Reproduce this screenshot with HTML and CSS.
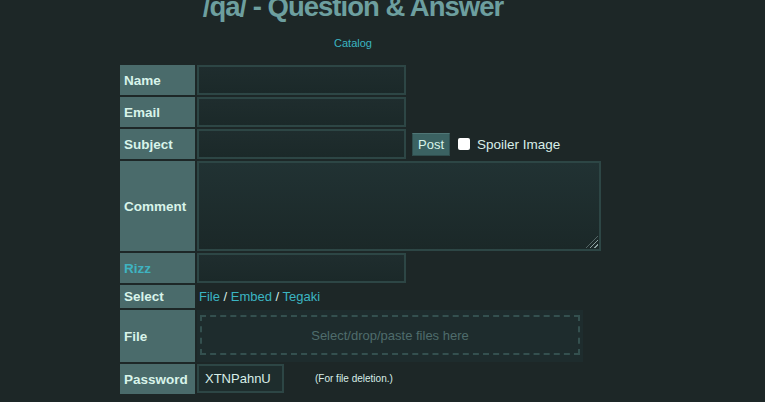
FILE: index.html
```html
<!DOCTYPE html>
<html lang="en">
<head>
    <meta charset="UTF-8">
    <meta name="viewport" content="width=device-width, initial-scale=1.0">
    <title>/qa/ - Question &amp; Answer</title>
    <link rel="stylesheet" href="styles.css">
</head>
<body>
    <header class="board-header">
        <h1 class="board-title">/qa/ - Question &amp; Answer</h1>
        <a class="catalog-link" href="#">Catalog</a>
    </header>

    <form class="post-form">
        <table class="post-table">
            <tr>
                <th>Name</th>
                <td><input class="field" type="text"></td>
            </tr>
            <tr>
                <th>Email</th>
                <td><input class="field" type="text"></td>
            </tr>
            <tr>
                <th>Subject</th>
                <td class="subject-cell">
                    <input class="field" type="text">
                    <button class="post-btn" type="button">Post</button>
                    <label class="spoiler"><span class="checkbox"></span>Spoiler Image</label>
                </td>
            </tr>
            <tr>
                <th>Comment</th>
                <td><div class="comment-box"><span class="grip"></span></div></td>
            </tr>
            <tr>
                <th class="required">Rizz</th>
                <td><input class="field" type="text"></td>
            </tr>
            <tr class="select-row">
                <th>Select</th>
                <td class="select-links">
                    <a href="#">File</a> / <a href="#">Embed</a> / <a href="#">Tegaki</a>
                </td>
            </tr>
            <tr>
                <th>File</th>
                <td>
                    <div class="dropzone">
                        <div class="dropzone-inner">Select/drop/paste files here</div>
                    </div>
                </td>
            </tr>
            <tr>
                <th>Password</th>
                <td class="password-cell">
                    <div class="field password-field">XTNPahnU</div>
                    <span class="hint">(For file deletion.)</span>
                </td>
            </tr>
        </table>
    </form>
</body>
</html>
```

FILE: styles.css
```css
body {
    margin: 0;
    background: #1d2727;
    color: #d8eee8;
    font-family: "Liberation Sans", Arial, sans-serif;
    font-size: 13px;
    overflow: hidden;
}

a {
    color: #3bb5c2;
    text-decoration: none;
}

/* Header */
.board-header {
    width: 706px;
    text-align: center;
}

.board-title {
    margin: -9px 0 0;
    font-size: 27.5px;
    font-weight: bold;
    letter-spacing: -1px;
    color: #6d9f9f;
    line-height: 32px;
}

.catalog-link {
    display: inline-block;
    margin-top: 14px;
    font-size: 11px;
}

/* Post form table */
.post-form {
    margin: 13px 0 0 118px;
}

.post-table {
    border-spacing: 2px;
}

.post-table th {
    width: 67px;
    height: 30px;
    padding: 0 4px;
    background: #4a6b6b;
    color: #d8f4ea;
    font-weight: bold;
    font-size: 13.5px;
    text-align: left;
}

.post-table th.required {
    color: #3fb3c1;
}

.post-table td {
    padding: 0;
    vertical-align: middle;
}

.field {
    box-sizing: border-box;
    display: block;
    width: 209px;
    height: 30px;
    border: 2px solid #2d4645;
    background: linear-gradient(#1f2d2e, #1b2929);
    color: #d8eee8;
    font: inherit;
    outline: none;
}

.subject-cell {
    display: flex;
    align-items: center;
}

.post-btn {
    margin-left: 6px;
    height: 23px;
    padding: 0 5px;
    border: 1px solid #2f4d4d;
    border-top-color: #4f7676;
    background: #3b6262;
    color: #d8f4ea;
    font: inherit;
    font-size: 13px;
}

.spoiler {
    display: flex;
    align-items: center;
    margin-left: 8px;
    font-size: 13.5px;
}

.checkbox {
    width: 12px;
    height: 12px;
    margin-right: 7px;
    background: #ffffff;
    border-radius: 2px;
}

.comment-box {
    position: relative;
    box-sizing: border-box;
    width: 404px;
    height: 90px;
    border: 2px solid #2d4645;
    background: linear-gradient(#213233, #1b2828);
}

.grip {
    position: absolute;
    right: 1px;
    bottom: 1px;
    width: 12px;
    height: 12px;
    background: repeating-linear-gradient(135deg, transparent 0 2px, #8aa0a0 2px 3px);
    clip-path: polygon(100% 0, 100% 100%, 0 100%);
}

.select-row th {
    height: 23px;
}

.select-links {
    padding-left: 2px !important;
    color: #d8eee8;
}

.dropzone {
    box-sizing: border-box;
    width: 386px;
    height: 52px;
    padding: 5px 3px;
    background: #1e2c2d;
}

.dropzone-inner {
    box-sizing: border-box;
    height: 40px;
    border: 2px dashed #34504f;
    color: #4f6c6c;
    display: flex;
    align-items: center;
    justify-content: center;
}

.password-cell {
    display: flex;
    align-items: center;
}

.password-field {
    width: 87px;
    height: 29px;
    padding-left: 6px;
    line-height: 25px;
    background: #1e2d2d;
}

.hint {
    margin-left: 31px;
    font-size: 10px;
}
```
